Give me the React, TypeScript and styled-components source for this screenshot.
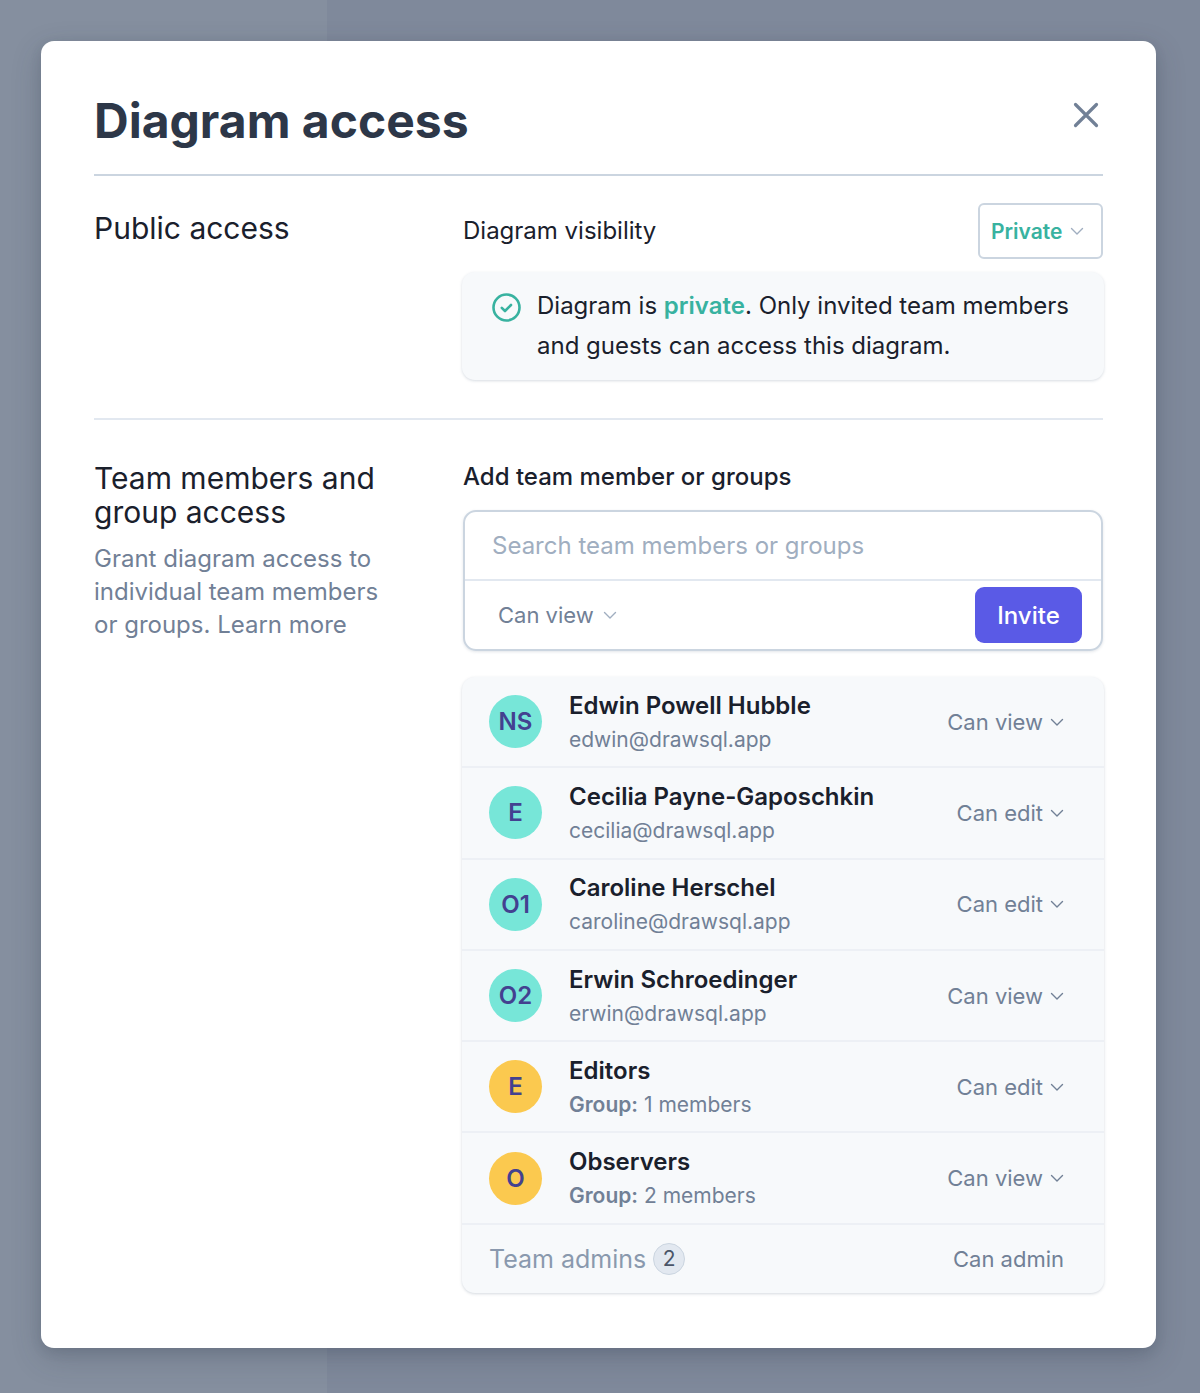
import React from "react";
import styled, { createGlobalStyle } from "styled-components";

const Global = createGlobalStyle`
  html, body { margin: 0; padding: 0; }
  body {
    height: 1393px;
    overflow: hidden;
    font-family: Inter, "Liberation Sans", sans-serif;
    background: linear-gradient(90deg, #858f9f 0, #858f9f 327px, #7f899b 327px, #7f899b 100%);
  }
  * { box-sizing: border-box; }
`;

const Backdrop = styled.div`
  padding: 41px 44px 45px 41px;
`;

const Modal = styled.div`
  height: 1307px;
  background: #fff;
  border-radius: 13px;
  padding: 0 53px;
  box-shadow: 0 10px 30px rgba(45, 55, 72, 0.22), 0 4px 12px rgba(45, 55, 72, 0.14);
`;

const Header = styled.header`
  height: 135px;
  display: flex;
  align-items: flex-start;
  justify-content: space-between;
  border-bottom: 2px solid #cbd5e0;
  padding-top: 51px;
`;

const Title = styled.h1`
  margin: 0;
  font-size: 48px;
  line-height: 58px;
  font-weight: 700;
  color: #2d3748;
`;

const CloseButton = styled.button`
  border: 0;
  padding: 0;
  background: none;
  margin: 5px -1px 0 0;
  width: 36px;
  height: 36px;
  color: #718096;
  display: flex;
`;

const Section = styled.section<{ $height: number; $divided?: boolean; $top: number }>`
  display: grid;
  grid-template-columns: 369px 640px;
  height: ${(p) => p.$height}px;
  padding-top: ${(p) => p.$top}px;
  border-bottom: ${(p) => (p.$divided ? "2px solid #e2e8f0" : "0")};
`;

const SideHeading = styled.h2`
  margin: 0;
  font-size: 30px;
  line-height: 34px;
  font-weight: 400;
  color: #1a202c;
`;

const PublicHeading = styled(SideHeading)`
  margin-top: 8px;
`;

const SideText = styled.p`
  margin: 13px 0 0;
  width: 300px;
  font-size: 24px;
  line-height: 33px;
  color: #718096;
`;

const VisibilityRow = styled.div`
  display: flex;
  justify-content: space-between;
  align-items: center;
  height: 56px;
  margin-bottom: 13px;
`;

const FieldLabel = styled.div<{ $weight?: number }>`
  font-size: 24px;
  line-height: 32px;
  font-weight: ${(p) => p.$weight ?? 400};
  color: #1a202c;
`;

const VisibilitySelect = styled.div`
  width: 125px;
  height: 56px;
  border: 2px solid #cbd5e0;
  border-radius: 6px;
  display: flex;
  align-items: center;
  padding-left: 11px;
  gap: 7px;
  font-size: 21px;
  font-weight: 600;
  color: #38b2a0;
`;

const Notice = styled.div`
  margin: 0 -1px;
  height: 108px;
  background: #f7f9fb;
  border-radius: 13px;
  box-shadow: 0 1px 3px rgba(113, 128, 150, 0.28);
  display: flex;
  padding: 14px 30px 0 29px;
  gap: 15px;
`;

const NoticeIcon = styled.span`
  flex: none;
  width: 31px;
  height: 31px;
  margin-top: 6px;
  color: #38b2a0;
  display: flex;
`;

const NoticeText = styled.p`
  margin: 0;
  font-size: 24px;
  line-height: 40px;
  color: #1a202c;
`;

const Accent = styled.strong`
  font-weight: 600;
  color: #38b2a0;
`;

const InviteBox = styled.div`
  margin-top: 17px;
  height: 141px;
  border: 2px solid #cbd5e0;
  border-radius: 13px;
  box-shadow: 0 1px 3px rgba(113, 128, 150, 0.2);
  display: flex;
  flex-direction: column;
`;

const SearchField = styled.div`
  height: 69px;
  flex: none;
  border-bottom: 2px solid #e2e8f0;
  padding-left: 27px;
  display: flex;
  align-items: center;
  font-size: 24px;
  color: #a0aec0;
`;

const InviteFooter = styled.div`
  flex: 1;
  display: flex;
  align-items: center;
  justify-content: space-between;
  padding: 0 19px 0 33px;
`;

const PermissionSelect = styled.div<{ $faint?: boolean }>`
  display: flex;
  align-items: center;
  gap: ${(p) => (p.$faint ? 8 : 6)}px;
  font-size: 22px;
  color: #718096;
  svg { color: ${(p) => (p.$faint ? "#a0aec0" : "#718096")}; }
`;

const InviteButton = styled.button`
  width: 107px;
  height: 56px;
  border: 0;
  border-radius: 9px;
  background: #5a5ae6;
  color: #fff;
  font: 500 24px Inter, sans-serif;
`;

const MemberList = styled.div`
  margin: 26px -1px 0;
  background: #f7f9fb;
  border-radius: 13px;
  box-shadow: 0 1px 3px rgba(113, 128, 150, 0.3);
`;

const MemberRow = styled.div`
  height: 91.3px;
  display: grid;
  grid-template-columns: 53px 1fr auto;
  align-items: center;
  column-gap: 27px;
  padding: 0 39px 0 27px;
  border-bottom: 2px solid #edf0f5;
`;

const Avatar = styled.div<{ $color: string }>`
  width: 53px;
  height: 53px;
  border-radius: 50%;
  background: ${(p) => p.$color};
  display: flex;
  align-items: center;
  justify-content: center;
  font-size: 24px;
  font-weight: 600;
  color: #434190;
`;

const MemberInfo = styled.div`
  display: flex;
  flex-direction: column;
`;

const MemberName = styled.div`
  font-size: 24px;
  line-height: 32px;
  font-weight: 600;
  color: #1a202c;
`;

const MemberDetail = styled.div`
  margin-top: 4px;
  font-size: 21px;
  line-height: 28px;
  color: #718096;
`;

const GroupLabel = styled.b`
  font-weight: 600;
`;

const AdminRow = styled.div`
  height: 68px;
  display: flex;
  align-items: center;
  justify-content: space-between;
  padding: 0 40px 0 27px;
`;

const AdminLabel = styled.div`
  display: flex;
  align-items: center;
  gap: 7px;
  font-size: 25px;
  color: #8a99ae;
`;

const CountBadge = styled.span`
  width: 32px;
  height: 32px;
  border-radius: 50%;
  background: #e2e8f0;
  border: 1px solid #cbd5e0;
  display: flex;
  align-items: center;
  justify-content: center;
  font-size: 21px;
  color: #4a5568;
`;

const AdminPermission = styled.div`
  font-size: 22px;
  color: #718096;
`;

const Chevron = ({ size = 16 }: { size?: number }) => (
  <svg width={size} height={size} viewBox="0 0 16 16" fill="none" stroke="currentColor" strokeWidth="1.4" strokeLinecap="round" strokeLinejoin="round">
    <path d="M2.5 5.5 8 11l5.5-5.5" />
  </svg>
);

const members = [
  { initials: "NS", name: "Edwin Powell Hubble", email: "edwin@drawsql.app", access: "Can view" },
  { initials: "E", name: "Cecilia Payne-Gaposchkin", email: "cecilia@drawsql.app", access: "Can edit" },
  { initials: "O1", name: "Caroline Herschel", email: "caroline@drawsql.app", access: "Can edit" },
  { initials: "O2", name: "Erwin Schroedinger", email: "erwin@drawsql.app", access: "Can view" },
  { initials: "E", name: "Editors", count: "1 members", access: "Can edit" },
  { initials: "O", name: "Observers", count: "2 members", access: "Can view" },
];

export default function App() {
  return (
    <>
      <Global />
      <Backdrop>
        <Modal>
          <Header>
            <Title>Diagram access</Title>
            <CloseButton aria-label="Close">
              <svg width="36" height="36" viewBox="0 0 36 36" fill="none" stroke="currentColor" strokeWidth="3.2" strokeLinecap="round">
                <path d="M7.5 7.5 28.5 28.5M28.5 7.5 7.5 28.5" />
              </svg>
            </CloseButton>
          </Header>
          <Section $height={244} $top={27} $divided>
            <div>
              <PublicHeading>Public access</PublicHeading>
            </div>
            <div>
              <VisibilityRow>
                <FieldLabel>Diagram visibility</FieldLabel>
                <VisibilitySelect>
                  Private
                  <PermissionSelect $faint><Chevron /></PermissionSelect>
                </VisibilitySelect>
              </VisibilityRow>
              <Notice>
                <NoticeIcon>
                  <svg width="31" height="31" viewBox="0 0 31 31" fill="none" stroke="currentColor" strokeWidth="2.6" strokeLinecap="round" strokeLinejoin="round">
                    <circle cx="15.5" cy="15.5" r="13" />
                    <path d="M10.8 15.8 14 19l6-6" />
                  </svg>
                </NoticeIcon>
                <NoticeText>
                  Diagram is <Accent>private</Accent>. Only invited team members and guests can access this diagram.
                </NoticeText>
              </Notice>
            </div>
          </Section>
          <Section $height={928} $top={41}>
            <div>
              <SideHeading>Team members and group access</SideHeading>
              <SideText>Grant diagram access to individual team members or groups. Learn more</SideText>
            </div>
            <div>
              <FieldLabel $weight={500}>Add team member or groups</FieldLabel>
              <InviteBox>
                <SearchField>Search team members or groups</SearchField>
                <InviteFooter>
                  <PermissionSelect $faint>
                    Can view
                    <Chevron />
                  </PermissionSelect>
                  <InviteButton>Invite</InviteButton>
                </InviteFooter>
              </InviteBox>
              <MemberList>
                {members.map((m) => (
                  <MemberRow key={m.name}>
                    <Avatar $color={m.count ? "#fbc94f" : "#77e6d8"}>{m.initials}</Avatar>
                    <MemberInfo>
                      <MemberName>{m.name}</MemberName>
                      <MemberDetail>
                        {m.count ? (
                          <>
                            <GroupLabel>Group:</GroupLabel> {m.count}
                          </>
                        ) : (
                          m.email
                        )}
                      </MemberDetail>
                    </MemberInfo>
                    <PermissionSelect>
                      {m.access}
                      <Chevron />
                    </PermissionSelect>
                  </MemberRow>
                ))}
                <AdminRow>
                  <AdminLabel>
                    Team admins <CountBadge>2</CountBadge>
                  </AdminLabel>
                  <AdminPermission>Can admin</AdminPermission>
                </AdminRow>
              </MemberList>
            </div>
          </Section>
        </Modal>
      </Backdrop>
    </>
  );
}
